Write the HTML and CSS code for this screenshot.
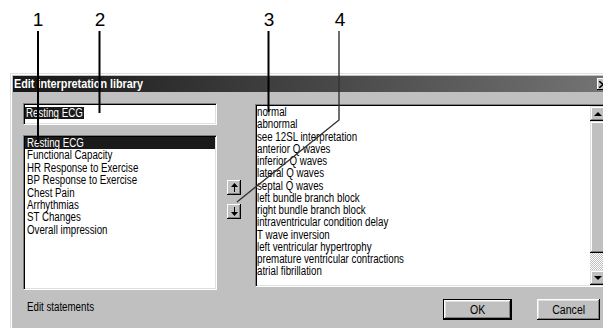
FILE: index.html
```html
<!DOCTYPE html>
<html lang="en">
<head>
  <meta charset="UTF-8" />
  <title>Edit interpretation library</title>
  <link rel="stylesheet" href="styles.css">
</head>
<body>
  <div class="callouts">
    <span class="num n1">1</span>
    <span class="num n2">2</span>
    <span class="num n3">3</span>
    <span class="num n4">4</span>
    <svg class="leaders" width="603" height="328" viewBox="0 0 603 328">
      <line x1="38" y1="31" x2="38" y2="143" stroke="#000" stroke-width="2" />
      <line x1="99.5" y1="31" x2="99.5" y2="113" stroke="#000" stroke-width="2" />
      <line x1="268.5" y1="31" x2="268.5" y2="112" stroke="#000" stroke-width="2" />
      <polyline points="339,31 339,120 237,202" fill="none" stroke="#333" stroke-width="1.4" />
    </svg>
  </div>

  <div class="dialog">
    <div class="titlebar">
      <span class="title"><span class="nx">Edit interpretation library</span></span>
      <span class="close">
        <svg width="8" height="7" viewBox="0 0 8 7"><path d="M0 0 L8 7 M8 0 L0 7" stroke="#000" stroke-width="1.6" /></svg>
      </span>
    </div>

    <div class="content">
      <div class="col-left">
        <div class="field"><span class="sel"><span class="nx">Resting ECG</span></span></div>
        <ul class="list sections">
          <li class="active"><span class="nx">Resting ECG</span></li>
          <li><span class="nx">Functional Capacity</span></li>
          <li><span class="nx">HR Response to Exercise</span></li>
          <li><span class="nx">BP Response to Exercise</span></li>
          <li><span class="nx">Chest Pain</span></li>
          <li><span class="nx">Arrhythmias</span></li>
          <li><span class="nx">ST Changes</span></li>
          <li><span class="nx">Overall impression</span></li>
        </ul>
        <div class="label"><span class="nx">Edit statements</span></div>
      </div>

      <div class="col-mid">
        <button class="arrow">
          <svg width="7" height="9" viewBox="0 0 7 9"><path d="M3.5 0 L7 4 L4 4 L4 9 L3 9 L3 4 L0 4 Z" fill="#000" /></svg>
        </button>
        <button class="arrow">
          <svg width="7" height="9" viewBox="0 0 7 9"><path d="M3.5 9 L7 5 L4 5 L4 0 L3 0 L3 5 L0 5 Z" fill="#000" /></svg>
        </button>
      </div>

      <div class="col-right">
        <div class="statements">
          <ul class="list">
            <li><span class="nx">normal</span></li>
            <li><span class="nx">abnormal</span></li>
            <li><span class="nx">see 12SL interpretation</span></li>
            <li><span class="nx">anterior Q waves</span></li>
            <li><span class="nx">inferior Q waves</span></li>
            <li><span class="nx">lateral Q waves</span></li>
            <li><span class="nx">septal Q waves</span></li>
            <li><span class="nx">left bundle branch block</span></li>
            <li><span class="nx">right bundle branch block</span></li>
            <li><span class="nx">intraventricular condition delay</span></li>
            <li><span class="nx">T wave inversion</span></li>
            <li><span class="nx">left ventricular hypertrophy</span></li>
            <li><span class="nx">premature ventricular contractions</span></li>
            <li><span class="nx">atrial fibrillation</span></li>
          </ul>
          <div class="scrollbar">
            <span class="sb-btn"><span class="tri up"></span></span>
            <span class="sb-thumb"></span>
            <span class="sb-track"></span>
            <span class="sb-btn"><span class="tri down"></span></span>
          </div>
        </div>
        <div class="actions">
          <button class="btn default"><span class="nb">OK</span></button>
          <button class="btn"><span class="nb">Cancel</span></button>
        </div>
      </div>
    </div>
  </div>
</body>
</html>
```

FILE: styles.css
```css
html, body {
  margin: 0;
  padding: 0;
}
body {
  width: 603px;
  height: 328px;
  overflow: hidden;
  position: relative;
  background: #fff;
  font-family: "Liberation Sans", Arial, sans-serif;
  font-size: 12px;
  color: #000;
}

/* the old dialog font is narrow: squeeze the text */
.nx {
  display: inline-block;
  transform: scaleX(0.81);
  transform-origin: 0 50%;
  white-space: nowrap;
}
.nb {
  display: inline-block;
  transform: scaleX(0.88);
}

/* callout numbers and leader lines over the dialog */
.callouts {
  position: absolute;
  left: 0;
  top: 0;
  width: 603px;
  height: 328px;
  z-index: 2;
  pointer-events: none;
}
.callouts .num {
  position: absolute;
  top: 9px;
  width: 20px;
  text-align: center;
  font-size: 19px;
  line-height: 22px;
}
.n1 { left: 28px; }
.n2 { left: 90px; }
.n3 { left: 259px; }
.n4 { left: 330px; }
.leaders {
  position: absolute;
  left: 0;
  top: 0;
}

/* dialog window */
.dialog {
  margin: 73px 0 0 10px;
  width: 602px;
  height: 270px;
  box-sizing: border-box;
  padding: 2px;
  background: #c0c0c0;
  border: 1px solid;
  border-color: #dfdfdf #000 #000 #dfdfdf;
  box-shadow: inset 1px 1px #fff, inset -1px -1px #808080;
}
.titlebar {
  height: 16px;
  display: flex;
  align-items: center;
  justify-content: space-between;
  padding-left: 1px;
  background: linear-gradient(to right, #161616, #747474);
  color: #fff;
  font-weight: bold;
}
.titlebar .nx {
  transform: scaleX(0.9);
}
.close {
  width: 12px;
  height: 12px;
  display: flex;
  align-items: center;
  justify-content: center;
  background: #c0c0c0;
  box-shadow: inset -1px -1px #000, inset 1px 1px #fff;
}

.content {
  display: flex;
  padding: 11px 0 0 10px;
}

/* sunken boxes */
.field, .list, .statements {
  background: #fff;
  border: 1px solid;
  border-color: #808080 #fff #fff #808080;
  box-shadow: inset 1px 1px #000, inset -1px -1px #dfdfdf;
}

.col-left {
  width: 194px;
  flex: none;
}
.field {
  height: 22px;
  box-sizing: border-box;
  padding: 3px 0 0 1px;
  line-height: 12px;
}
.sel {
  display: inline-block;
  width: 58px;
  height: 12px;
  background: #1a1a1a;
  color: #fff;
  padding-left: 1px;
}
.list {
  list-style: none;
  margin: 0;
  padding: 1px 1px 0;
}
.list li {
  line-height: 12.4px;
  height: 12.4px;
  padding-left: 2px;
}
.list li.active {
  background: #1a1a1a;
  color: #fff;
}
.sections {
  margin-top: 10px;
  height: 155px;
  box-sizing: border-box;
}
.label {
  margin-top: 11px;
  padding-left: 4px;
  line-height: 12px;
}

.col-mid {
  flex: none;
  width: 14px;
  margin-left: 10px;
  padding-top: 77px;
  display: flex;
  flex-direction: column;
  gap: 9px;
}
.arrow {
  width: 14px;
  height: 15px;
  padding: 0;
  border: none;
  display: flex;
  align-items: center;
  justify-content: center;
  background: #c0c0c0;
  box-shadow: inset -1px -1px #000, inset 1px 1px #fff, inset -2px -2px #808080;
}

.col-right {
  flex: none;
  width: 353px;
  margin-left: 14px;
  margin-top: 1px;
}
.statements {
  height: 183px;
  box-sizing: border-box;
  display: flex;
}
.statements .list {
  flex: 1;
  border: none;
  box-shadow: none;
  background: transparent;
  padding: 1px 0 0 1px;
}
.statements .list li {
  line-height: 12.25px;
  height: 12.25px;
  padding-left: 0;
}
.scrollbar {
  width: 16px;
  margin: 1px 1px 1px 0;
  display: flex;
  flex-direction: column;
}
.sb-btn, .sb-thumb {
  background: #c0c0c0;
  box-shadow: inset -1px -1px #000, inset 1px 1px #dfdfdf, inset -2px -2px #808080, inset 2px 2px #fff;
}
.sb-btn {
  height: 15px;
  display: flex;
  align-items: center;
  justify-content: center;
}
.sb-thumb {
  height: 132px;
}
.sb-track {
  flex: 1;
  background: repeating-conic-gradient(#fff 0 25%, #c0c0c0 0 50%) 0 0 / 2px 2px;
}
.tri {
  width: 0;
  height: 0;
  border-left: 4px solid transparent;
  border-right: 4px solid transparent;
}
.tri.up { border-bottom: 4px solid #000; }
.tri.down { border-top: 4px solid #000; }

.actions {
  display: flex;
  justify-content: flex-end;
  gap: 25px;
  margin-top: 12px;
  padding-right: 8px;
}
.btn {
  height: 21px;
  width: 63px;
  padding: 0;
  border: none;
  background: #c0c0c0;
  font: inherit;
  color: #000;
  box-shadow: inset -1px -1px #000, inset 1px 1px #fff, inset -2px -2px #808080, inset 2px 2px #dfdfdf;
}
.btn.default {
  width: 69px;
  border: 1px solid #000;
}
```
